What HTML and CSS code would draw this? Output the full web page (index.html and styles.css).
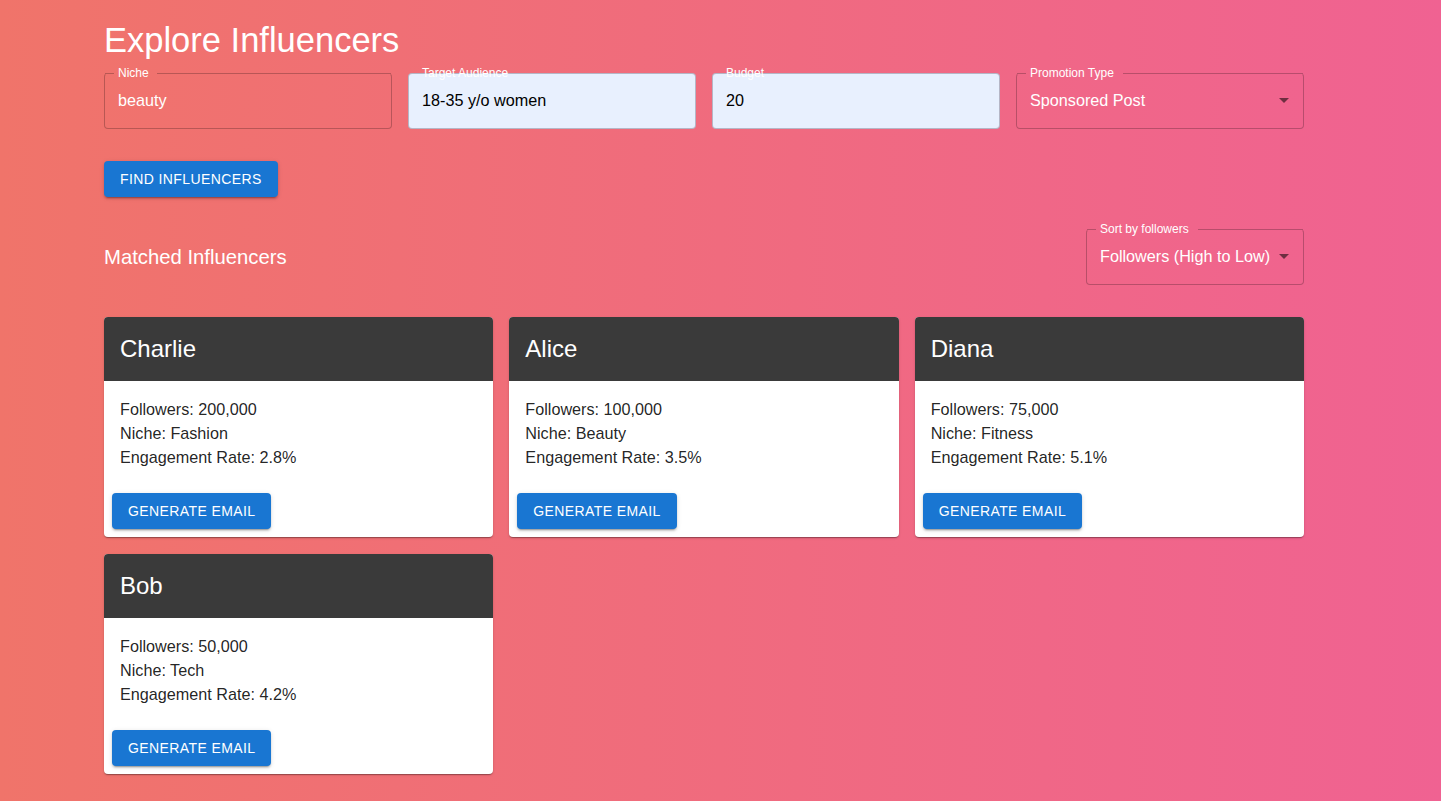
FILE: index.html
```html
<!DOCTYPE html>
<html lang="en">
<head>
<meta charset="utf-8">
<title>Explore Influencers</title>
<link rel="stylesheet" href="styles.css">
</head>
<body>
<main class="container">
  <h1 class="title">Explore Influencers</h1>
  <div class="form-grid">
    <div class="field field-niche">
      <span class="field-label">Niche</span>
      <div class="field-value">beauty</div>
    </div>
    <div class="field field-autofill">
      <span class="field-label">Target Audience</span>
      <div class="field-value">18-35 y/o women</div>
    </div>
    <div class="field field-autofill">
      <span class="field-label">Budget</span>
      <div class="field-value">20</div>
    </div>
    <div class="field field-select field-promo">
      <span class="field-label">Promotion Type</span>
      <div class="field-value">Sponsored Post</div>
      <svg class="arrow" viewBox="0 0 24 24" width="24" height="24"><path d="M7 10l5 5 5-5z"/></svg>
    </div>
  </div>
  <button class="btn btn-find">Find Influencers</button>

  <div class="results-head">
    <h2 class="subtitle">Matched Influencers</h2>
    <div class="field field-select field-sort">
      <span class="field-label">Sort by followers</span>
      <div class="field-value">Followers (High to Low)</div>
      <svg class="arrow" viewBox="0 0 24 24" width="24" height="24"><path d="M7 10l5 5 5-5z"/></svg>
    </div>
  </div>

  <div class="cards">
    <div class="card">
      <div class="card-head">Charlie</div>
      <div class="card-body">
        <p>Followers: 200,000</p>
        <p>Niche: Fashion</p>
        <p>Engagement Rate: 2.8%</p>
      </div>
      <div class="card-actions"><button class="btn">Generate Email</button></div>
    </div>
    <div class="card">
      <div class="card-head">Alice</div>
      <div class="card-body">
        <p>Followers: 100,000</p>
        <p>Niche: Beauty</p>
        <p>Engagement Rate: 3.5%</p>
      </div>
      <div class="card-actions"><button class="btn">Generate Email</button></div>
    </div>
    <div class="card">
      <div class="card-head">Diana</div>
      <div class="card-body">
        <p>Followers: 75,000</p>
        <p>Niche: Fitness</p>
        <p>Engagement Rate: 5.1%</p>
      </div>
      <div class="card-actions"><button class="btn">Generate Email</button></div>
    </div>
    <div class="card">
      <div class="card-head">Bob</div>
      <div class="card-body">
        <p>Followers: 50,000</p>
        <p>Niche: Tech</p>
        <p>Engagement Rate: 4.2%</p>
      </div>
      <div class="card-actions"><button class="btn">Generate Email</button></div>
    </div>
  </div>
</main>
</body>
</html>
```

FILE: styles.css
```css
* { box-sizing: border-box; }

html, body {
  margin: 0;
}

body {
  min-height: 801px;
  background: linear-gradient(to right, #f0746a, #f06292);
  font-family: "Liberation Sans", Arial, sans-serif;
  color: rgba(0, 0, 0, 0.87);
}

.container {
  width: 1200px;
  margin-left: 104px;
  padding-top: 19px;
  padding-bottom: 27px;
}

.title {
  margin: 0;
  font-size: 34.5px;
  line-height: 43px;
  font-weight: 400;
  color: #fff;
}

.form-grid {
  display: grid;
  grid-template-columns: repeat(4, 1fr);
  gap: 16px;
  margin-top: 11px;
}

.field {
  position: relative;
  height: 56px;
  border: 1px solid rgba(0, 0, 0, 0.23);
  border-radius: 4px;
  display: flex;
  align-items: center;
  padding: 0 13px;
}

.field-label {
  position: absolute;
  left: 8px;
  top: -8px;
  padding: 0 5px;
  font-size: 12px;
  line-height: 14px;
  color: #fff;
}

.field-value {
  font-size: 16.2px;
  line-height: 23px;
  color: #fff;
  white-space: nowrap;
  margin-top: -2px;
}

.field-autofill {
  background: #e8f0fe;
  border-color: rgba(120, 110, 130, 0.45);
}

.field-autofill .field-value {
  color: #000;
}

/* notched outline for non-autofilled fields */
.field:not(.field-autofill) {
  border-top-color: transparent;
}

.field:not(.field-autofill)::before,
.field:not(.field-autofill)::after {
  content: "";
  position: absolute;
  top: -1px;
  height: 1px;
  background: rgba(0, 0, 0, 0.23);
}

.field:not(.field-autofill)::before {
  left: 0;
  width: 9px;
}

.field:not(.field-autofill)::after {
  right: 0;
}

.field-niche::after { left: 52px; }
.field-promo::after { left: 106px; }
.field-sort::after { left: 111px; }

.field-select .arrow {
  position: absolute;
  right: 7px;
  top: 14px;
  fill: rgba(0, 0, 0, 0.54);
}

.btn {
  font-family: "Liberation Sans", Arial, sans-serif;
  font-size: 14px;
  font-weight: 400;
  letter-spacing: 0.4px;
  text-transform: uppercase;
  color: #fff;
  background: #1976d2;
  border: none;
  border-radius: 4px;
  height: 36px;
  padding: 0 16px;
  box-shadow: 0 3px 1px -2px rgba(0,0,0,0.2), 0 2px 2px 0 rgba(0,0,0,0.14), 0 1px 5px 0 rgba(0,0,0,0.12);
  cursor: pointer;
}

.btn-find {
  margin-top: 32px;
  display: block;
}

.results-head {
  margin-top: 32px;
  display: flex;
  align-items: center;
  justify-content: space-between;
}

.subtitle {
  margin: 0;
  font-size: 20.3px;
  font-weight: 400;
  line-height: 32px;
  color: #fff;
}

.field-sort {
  width: 218px;
}

.cards {
  margin-top: 32px;
  display: grid;
  grid-template-columns: repeat(3, 1fr);
  gap: 17px 16px;
}

.card {
  background: #fff;
  border-radius: 4px;
  overflow: hidden;
  box-shadow: 0 2px 1px -1px rgba(0,0,0,0.2), 0 1px 1px 0 rgba(0,0,0,0.14), 0 1px 3px 0 rgba(0,0,0,0.12);
}

.card-head {
  background: #3a3a3a;
  color: #fff;
  height: 64px;
  padding: 16px;
  font-size: 24px;
  line-height: 32px;
}

.card-body {
  padding: 16px;
}

.card-body p {
  margin: 0;
  font-size: 16.2px;
  line-height: 24px;
}

.card-actions {
  padding: 8px;
}
```
